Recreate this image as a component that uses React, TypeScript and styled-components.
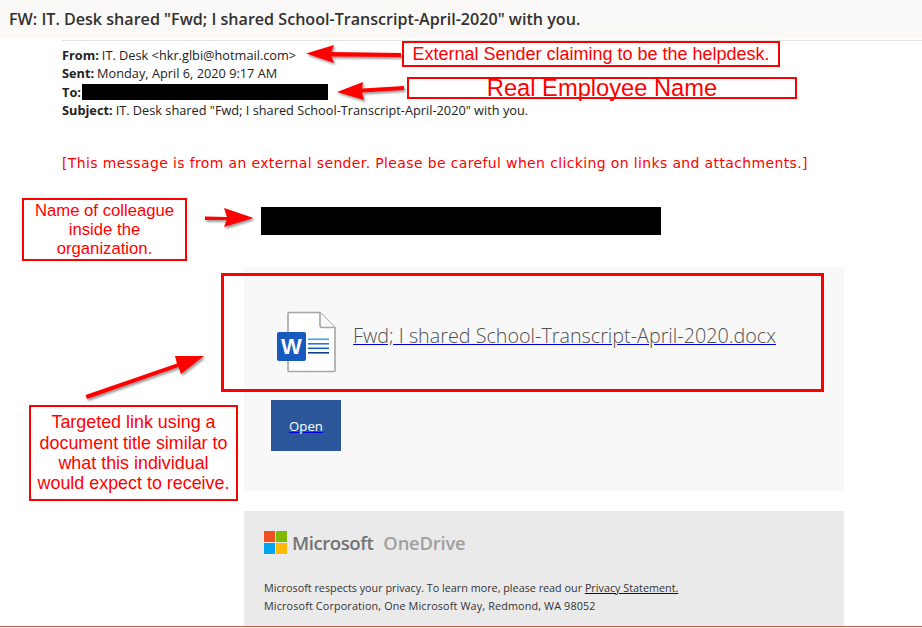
import React from "react";
import styled, { createGlobalStyle } from "styled-components";

const Global = createGlobalStyle`
  html, body { margin: 0; padding: 0; background: #fff; }
  body { font-family: "Open Sans", "Liberation Sans", sans-serif; }
  * { box-sizing: border-box; }
`;

const Page = styled.div`
  position: relative;
  width: 922px;
  height: 628px;
  overflow: hidden;
  background: #fff;
`;

const TitleBar = styled.header`
  height: 38px;
  padding: 0 9px;
  display: flex;
  align-items: center;
  background: #faf9f8;
  color: #323130;
  font-size: 16.1px;
  font-weight: 600;
  white-space: nowrap;
`;

const Headers = styled.section`
  margin: 2px 0 0 62px;
  padding-top: 5px;
  height: 80px;
  border-top: 1px solid #e1e1e1;
  color: #222;
  font-size: 12.75px;
`;

const HeaderRow = styled.div`
  height: 18.3px;
  line-height: 18px;
  display: flex;
  align-items: center;
  white-space: pre;
`;

const HeaderLabel = styled.b`
  font-weight: 700;
  margin-right: 3px;
`;

const RedactedTo = styled.span`
  display: block;
  width: 246px;
  height: 16px;
  margin-left: -2px;
  background: #000;
  flex: none;
`;

const Notice = styled.p`
  margin: 0 0 0 62px;
  padding-top: 33px;
  height: 87px;
  line-height: 20px;
  color: #f00;
  font-family: "DejaVu Sans", sans-serif;
  font-size: 14px;
  letter-spacing: 0.36px;
  white-space: nowrap;
`;

const Colleague = styled.div`
  margin-left: 261px;
  height: 60px;
`;

const RedactedName = styled.div`
  width: 400px;
  height: 28px;
  background: #000;
`;

const Column = styled.div`
  margin-left: 244px;
  width: 600px;
`;

const AttachmentPanel = styled.section`
  height: 224px;
  background: #f8f8f8;
  padding: 44px 0 0 33px;
`;

const FileRow = styled.div`
  height: 62px;
  display: flex;
  align-items: center;
  gap: 16px;
`;

const FileLink = styled.a`
  color: #0000e0;
  font-size: 19.75px;
  font-weight: 300;
  text-decoration: underline;
  white-space: nowrap;
  margin-top: -13px;
`;

const FileName = styled.span`
  color: #505050;
`;

const OpenButton = styled.div`
  margin: 27px 0 0 -6px;
  width: 70px;
  height: 51px;
  background: #2b579a;
  display: flex;
  align-items: center;
  justify-content: center;
`;

const OpenLink = styled.a`
  color: #0000e0;
  font-size: 13.2px;
  text-decoration: underline;
`;

const OpenLabel = styled.span`
  color: #fff;
`;

const Footer = styled.footer`
  margin-top: 20px;
  height: 115px;
  background: #eaeaea;
  padding: 20px 20px 0;
  overflow: hidden;
`;

const Brand = styled.div`
  display: flex;
  align-items: center;
  height: 23px;
  white-space: nowrap;
`;

const BrandName = styled.span`
  margin-left: 5px;
  color: #737373;
  font-size: 18.6px;
  font-weight: 600;
  letter-spacing: -0.45px;
`;

const ProductName = styled.span`
  margin-left: 10px;
  color: #a19f9d;
  font-size: 18.4px;
  font-weight: 600;
  letter-spacing: -0.2px;
`;

const Legal = styled.div`
  margin-top: 25px;
  color: #333;
  font-size: 10.8px;
  line-height: 18px;
  white-space: nowrap;
`;

const LegalLine = styled.div<{ $spacing: number }>`
  letter-spacing: ${(p) => p.$spacing}px;
`;

const PrivacyLink = styled.a`
  color: #0000a0;
  text-decoration: underline;
`;

const PrivacyText = styled.span`
  color: #333;
`;

const BottomRule = styled.div`
  position: absolute;
  left: 0;
  right: 0;
  top: 626px;
  height: 1px;
  background: #c5584f;
`;

const Callout = styled.div<{ $x: number; $y: number; $w: number; $h: number; $size: number; $line: number }>`
  position: absolute;
  left: ${(p) => p.$x}px;
  top: ${(p) => p.$y}px;
  width: ${(p) => p.$w}px;
  height: ${(p) => p.$h}px;
  border: 2px solid #f00;
  color: #f00;
  font-family: "Liberation Sans", Arial, sans-serif;
  font-size: ${(p) => p.$size}px;
  line-height: ${(p) => p.$line}px;
  text-align: center;
  white-space: nowrap;
  display: flex;
  flex-direction: column;
  align-items: center;
  justify-content: center;
`;

const Highlight = styled.div`
  position: absolute;
  left: 221px;
  top: 273px;
  width: 603px;
  height: 119px;
  border: 3px solid #f00;
`;

const Arrows = styled.svg`
  position: absolute;
  left: 0;
  top: 0;
  pointer-events: none;
`;

const WordIcon = () => (
  <svg width="60" height="62" viewBox="0 0 60 62" style={{ flex: "none" }}>
    <path d="M12 1.5H43L58 16.5V59.5Q58 60.5 57 60.5H12Q11 60.5 11 59.5V2.5Q11 1.5 12 1.5Z" fill="#fff" stroke="#a6a6a6" strokeWidth="1.6" />
    <path d="M43 1.5V14Q43 16.5 45.5 16.5H58" fill="#f8f8f8" stroke="#a6a6a6" strokeWidth="1.6" />
    <rect x="31" y="27.5" width="21" height="1.6" fill="#41a5ee" />
    <rect x="31" y="32" width="21" height="1.6" fill="#2b7cd3" />
    <rect x="31" y="36.5" width="21" height="1.6" fill="#185abd" />
    <rect x="31" y="41" width="21" height="1.6" fill="#103f91" />
    <rect x="0" y="21" width="29" height="29" rx="2" fill="#185abd" />
    <text x="14.5" y="43" textAnchor="middle" fontFamily="Liberation Sans" fontWeight="700" fontSize="22" fill="#fff">W</text>
  </svg>
);

const MicrosoftLogo = () => (
  <svg width="23" height="23" viewBox="0 0 23 23" style={{ flex: "none" }}>
    <rect width="11" height="11" fill="#f25022" />
    <rect x="12" width="11" height="11" fill="#7fba00" />
    <rect y="12" width="11" height="11" fill="#00a4ef" />
    <rect x="12" y="12" width="11" height="11" fill="#ffb900" />
  </svg>
);

const arrowShapes = [
  "M306 53.5L334 45L331.5 52L401 53V57L331.5 56.5L334 63Z",
  "M337 92L363 82L362 88.5L404 86V90L362 92.5L364 100Z",
  "M205 216.5L227 217L224 208L253.5 218L224 227L226.5 220L205 220Z",
  "M85.5 395L177 363.5L175 356L204 356L181 374L178.5 367L87 399Z",
];

export default function App() {
  return (
    <Page>
      <Global />
      <TitleBar>FW: IT. Desk shared "Fwd; I shared School-Transcript-April-2020" with you.</TitleBar>
      <Headers>
        <HeaderRow><HeaderLabel>From:</HeaderLabel>IT. Desk &lt;hkr.glbi@hotmail.com&gt;</HeaderRow>
        <HeaderRow><HeaderLabel>Sent:</HeaderLabel>Monday, April 6, 2020 9:17 AM</HeaderRow>
        <HeaderRow><HeaderLabel>To:</HeaderLabel><RedactedTo /></HeaderRow>
        <HeaderRow><HeaderLabel>Subject:</HeaderLabel>IT. Desk shared "Fwd; I shared School-Transcript-April-2020" with you.</HeaderRow>
      </Headers>
      <Notice>[This message is from an external sender. Please be careful when clicking on links and attachments.]</Notice>
      <Colleague><RedactedName /></Colleague>
      <Column>
        <AttachmentPanel>
          <FileRow>
            <WordIcon />
            <FileLink><FileName>Fwd; I shared School-Transcript-April-2020.docx</FileName></FileLink>
          </FileRow>
          <OpenButton><OpenLink><OpenLabel>Open</OpenLabel></OpenLink></OpenButton>
        </AttachmentPanel>
        <Footer>
          <Brand>
            <MicrosoftLogo />
            <BrandName>Microsoft</BrandName>
            <ProductName>OneDrive</ProductName>
          </Brand>
          <Legal>
            <LegalLine $spacing={0}>Microsoft respects your privacy. To learn more, please read our <PrivacyLink><PrivacyText>Privacy Statement.</PrivacyText></PrivacyLink></LegalLine>
            <LegalLine $spacing={0.14}>Microsoft Corporation, One Microsoft Way, Redmond, WA 98052</LegalLine>
          </Legal>
        </Footer>
      </Column>
      <BottomRule />
      <Highlight />
      <Callout $x={402} $y={41} $w={378} $h={26} $size={18} $line={20}>External Sender claiming to be the helpdesk.</Callout>
      <Callout $x={407} $y={77} $w={390} $h={22} $size={23.7} $line={20}>Real Employee Name</Callout>
      <Callout $x={22} $y={198} $w={165} $h={63} $size={16.7} $line={19.3}>
        <div>Name of colleague</div><div>inside the</div><div>organization.</div>
      </Callout>
      <Callout $x={29} $y={405} $w={209} $h={96} $size={17.9} $line={20.3}>
        <div>Targeted link using a</div><div>document title similar to</div><div>what this individual</div><div>would expect to receive.</div>
      </Callout>
      <Arrows width="922" height="628" viewBox="0 0 922 628">
        <defs>
          <filter id="arrowShadow" x="-20%" y="-50%" width="140%" height="200%">
            <feDropShadow dx="1.5" dy="2" stdDeviation="1.2" floodColor="#000" floodOpacity="0.4" />
          </filter>
        </defs>
        {arrowShapes.map((d) => (
          <path key={d} d={d} fill="#f00" filter="url(#arrowShadow)" />
        ))}
      </Arrows>
    </Page>
  );
}
